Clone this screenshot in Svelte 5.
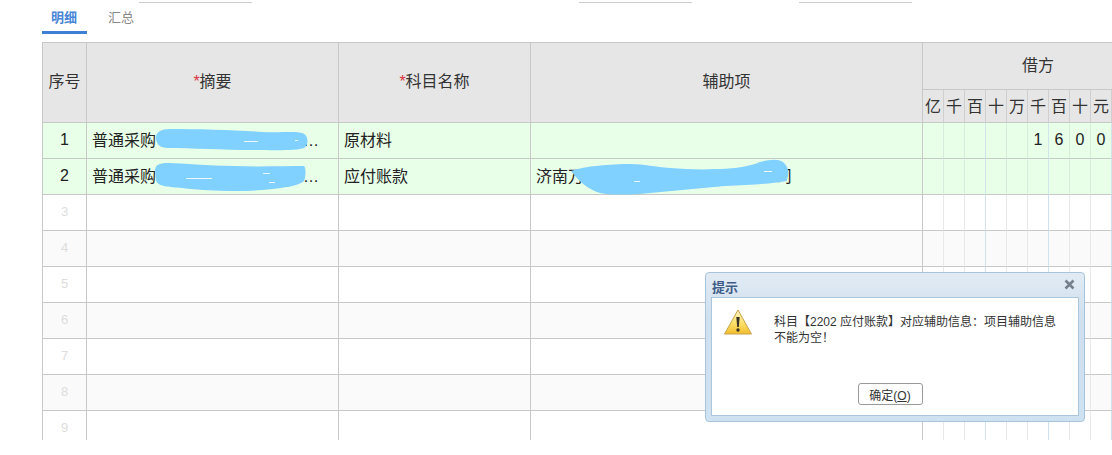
<script>
  const digitHeads = ['亿', '千', '百', '十', '万', '千', '百', '十', '元', '', ''];
  const amount = ['', '', '', '', '', '1', '6', '0', '0', '', ''];
  const blank = ['', '', '', '', '', '', '', '', '', '', ''];
  const emptyRows = [3, 4, 5, 6, 7, 8, 9];
</script>

<div class="page">
  <div class="filters">
    <span class="filter one"></span>
    <span class="filter two"></span>
    <span class="filter three"></span>
  </div>

  <nav class="tabs">
    <span class="tab active">明细</span>
    <span class="tab">汇总</span>
  </nav>

  <div class="grid-wrap">
    <table>
      <colgroup>
        <col class="c-no" />
        <col class="c-sum" />
        <col class="c-subj" />
        <col class="c-aux" />
        {#each digitHeads as _}
          <col class="c-digit" />
        {/each}
      </colgroup>
      <thead>
        <tr class="head-a">
          <th rowspan="2">序号</th>
          <th rowspan="2"><span class="req">*</span>摘要</th>
          <th rowspan="2"><span class="req">*</span>科目名称</th>
          <th rowspan="2">辅助项</th>
          <th colspan="11" class="debit">借方</th>
        </tr>
        <tr class="head-b">
          {#each digitHeads as d}
            <th class="dh">{d}</th>
          {/each}
        </tr>
      </thead>
      <tbody>
        <tr class="filled">
          <td class="no">1</td>
          <td class="txt">普通采购<span class="gap sum"></span>…</td>
          <td class="txt">原材料</td>
          <td class="txt"></td>
          {#each amount as a}
            <td class="d">{a}</td>
          {/each}
        </tr>
        <tr class="filled">
          <td class="no">2</td>
          <td class="txt">普通采购<span class="gap sum"></span>…</td>
          <td class="txt">应付账款</td>
          <td class="txt">济南万<span class="gap aux"></span>司</td>
          {#each blank as a}
            <td class="d">{a}</td>
          {/each}
        </tr>
        {#each emptyRows as n}
          <tr class:alt={n % 2 === 0}>
            <td class="no ghost">{n}</td>
            <td></td>
            <td></td>
            <td></td>
            {#each blank as a}
              <td class="d">{a}</td>
            {/each}
          </tr>
        {/each}
      </tbody>
    </table>
  </div>

  <svg class="scribble" width="1112" height="455" viewBox="0 0 1112 455" aria-hidden="true">
    <g fill="#80d1ff">
      <path d="M156 138 C156 132 161 129 170 129 C200 129 235 130 262 132 C280 133 295 131 302 133 C309 135 309 145 304 148 C298 151 270 150 250 150 C225 150 190 148 168 148 C160 148 156 144 156 138 Z" />
      <path d="M155 171 C155 165 159 163 168 163 C185 163 205 166 235 166 C260 167 285 166 304 166 C306 168 306 176 304 181 C298 186 285 188 262 190 C240 192 205 191 182 188 C170 187 157 187 156 180 Z" />
      <path d="M571 171 C585 166 610 164 630 164 C645 164 655 167 670 168 C685 169 700 170 715 169 C730 169 745 167 755 164 C765 160 777 158 783 162 C790 168 789 176 786 181 C770 184 750 185 725 186 C700 188 675 191 650 193 C630 195 610 195 600 193 C590 190 580 183 571 171 Z" />
    </g>
    <g stroke="#fff" stroke-width="1" fill="none" opacity="0.85">
      <path d="M244 141.500 H258" />
      <path d="M295 140.500 H298" />
      <path d="M186 178.500 H212" />
      <path d="M263 173.500 H270" />
      <path d="M269 182.500 H275" />
      <path d="M634 181.500 H640" />
      <path d="M764 171.500 H772" />
    </g>
  </svg>

  <div class="dialog" role="dialog">
    <header class="dlg-head">
      <span class="dlg-title">提示</span>
      <svg class="dlg-close" width="11" height="11" viewBox="0 0 11 11" aria-hidden="true">
        <path d="M1.500 1.500 L9.500 9.500 M9.500 1.500 L1.500 9.500" stroke="#76808c" stroke-width="2.600" fill="none" />
      </svg>
    </header>
    <div class="dlg-inner">
      <div class="dlg-msg">
        <svg class="warn" width="30" height="27" viewBox="0 0 30 27" aria-hidden="true">
          <defs>
            <linearGradient id="warnFill" x1="0" y1="0" x2="0" y2="1">
              <stop offset="0" stop-color="#fff6c8" />
              <stop offset="0.550" stop-color="#fbe06a" />
              <stop offset="1" stop-color="#f2bd2e" />
            </linearGradient>
          </defs>
          <path d="M15 1 L28.500 25 H1.500 Z" fill="url(#warnFill)" stroke="#c9a24a" stroke-width="1" stroke-linejoin="round" />
          <path d="M13.300 8 H16.700 L15.800 18 H14.200 Z" fill="#3a3222" />
          <circle cx="15" cy="21" r="1.700" fill="#3a3222" />
        </svg>
        <p>科目【2202 应付账款】对应辅助信息：项目辅助信息不能为空！</p>
      </div>
      <div class="dlg-actions">
        <button type="button">确定(<u>O</u>)</button>
      </div>
    </div>
  </div>
</div>

<style>
  :global(body) {
    margin: 0;
    background: #fff;
  }
  .page {
    position: relative;
    width: 1112px;
    height: 455px;
    overflow: hidden;
    font-family: "Liberation Sans", "Noto Sans CJK SC", sans-serif;
    color: #333;
  }
  .filters {
    display: flex;
    height: 3px;
    padding: 2px 0 0 139px;
    box-sizing: border-box;
  }
  .filter {
    height: 1px;
    background: #ccc;
  }
  .one { width: 113px; }
  .two { width: 113px; margin-left: 327px; }
  .three { width: 113px; margin-left: 107px; }

  .tabs {
    display: flex;
    margin: 0 0 8px 42px;
    height: 31px;
  }
  .tab {
    box-sizing: border-box;
    height: 31px;
    padding: 7px 21px 0 9px;
    font-size: 13px;
    line-height: 15px;
    color: #888;
  }
  .tab.active {
    width: 45px;
    padding-right: 0;
    margin-right: 12px;
    font-weight: bold;
    color: #4a86d8;
    border-bottom: 3px solid #3f80d6;
  }

  .grid-wrap {
    margin-left: 42px;
    height: 398px;
    overflow: hidden;
    box-sizing: border-box;
    border-left: 1px solid #c8c8c8;
    border-top: 1px solid #c8c8c8;
  }
  table {
    width: 1111px;
    table-layout: fixed;
    border-collapse: separate;
    border-spacing: 0;
    font-size: 16px;
    color: #222;
  }
  .c-no { width: 44px; }
  .c-sum { width: 252px; }
  .c-subj { width: 192px; }
  .c-aux { width: 392px; }
  .c-digit { width: 21px; }

  th, td {
    box-sizing: border-box;
    padding: 0 0 2px;
    border-right: 1px solid #c8c8c8;
    border-bottom: 1px solid #c8c8c8;
    font-weight: normal;
    overflow: hidden;
    white-space: nowrap;
  }
  th {
    padding-bottom: 5px;
    background: #e6e6e6;
    text-align: center;
    color: #333;
  }
  .head-a { height: 47px; }
  .head-b { height: 33px; }
  .debit { padding-bottom: 4px; }
  .dh {
    border-right-color: #cfcfcf;
    padding-bottom: 3px;
  }
  .req {
    color: #d9333f;
    font-size: 16px;
  }
  tbody tr { height: 36px; }
  tr.alt td { background: #fafafa; }
  tr.filled td { background: #e8ffe8; }
  .no { text-align: center; }
  .ghost {
    color: #ddd;
    font-size: 13px;
  }
  td.txt { padding: 0 0 4px 5px; }
  .gap {
    display: inline-block;
  }
  .gap.sum { width: 147px; }
  .gap.aux { width: 192px; }
  td.d {
    text-align: center;
    font-size: 16px;
    border-right-color: #e8e8e8;
  }
  tr.filled td.d { border-right-color: #d9ebdc; }
  td.d:nth-child(7), td.d:nth-child(10), td.d:nth-child(13) { border-right-color: #cfe2ee; }
  tr.filled td.d:nth-child(7), tr.filled td.d:nth-child(10), tr.filled td.d:nth-child(13) { border-right-color: #cfe6ea; }

  .scribble {
    position: absolute;
    left: 0;
    top: 0;
    pointer-events: none;
  }

  .dialog {
    position: absolute;
    left: 705px;
    top: 272px;
    width: 380px;
    height: 150px;
    box-sizing: border-box;
    display: flex;
    flex-direction: column;
    padding: 0 5px 5px 5px;
    border: 1px solid #a8c4da;
    border-radius: 4px;
    background: linear-gradient(#e2ebf4, #cfe0ef 30%, #cfe2f2);
  }
  .dlg-head {
    display: flex;
    align-items: center;
    justify-content: space-between;
    height: 24px;
    flex: none;
    padding: 0 4px 0 1px;
    box-sizing: border-box;
  }
  .dlg-title {
    font-size: 13px;
    font-weight: bold;
    color: #3f5d87;
    padding-top: 2px;
  }
  .dlg-close { margin-top: -1px; }
  .dlg-inner {
    flex: 1;
    display: flex;
    flex-direction: column;
    justify-content: space-between;
    background: #fff;
    border: 1px solid #a9c6dc;
  }
  .dlg-msg {
    display: flex;
    align-items: flex-start;
    padding: 11px 0 0 11px;
  }
  .warn {
    flex: none;
    margin-right: 21px;
  }
  .dlg-msg p {
    margin: 5px 0 0;
    width: 290px;
    font-size: 12px;
    line-height: 16px;
    color: #333;
  }
  .dlg-actions {
    display: flex;
    justify-content: center;
    padding: 0 10px 10px 0;
  }
  button {
    box-sizing: border-box;
    width: 65px;
    height: 22px;
    padding: 0;
    border: 1px solid #9a9a9a;
    border-radius: 3px;
    background: #fff;
    font: 12px "Liberation Sans", "Noto Sans CJK SC", sans-serif;
    color: #333;
  }
</style>
